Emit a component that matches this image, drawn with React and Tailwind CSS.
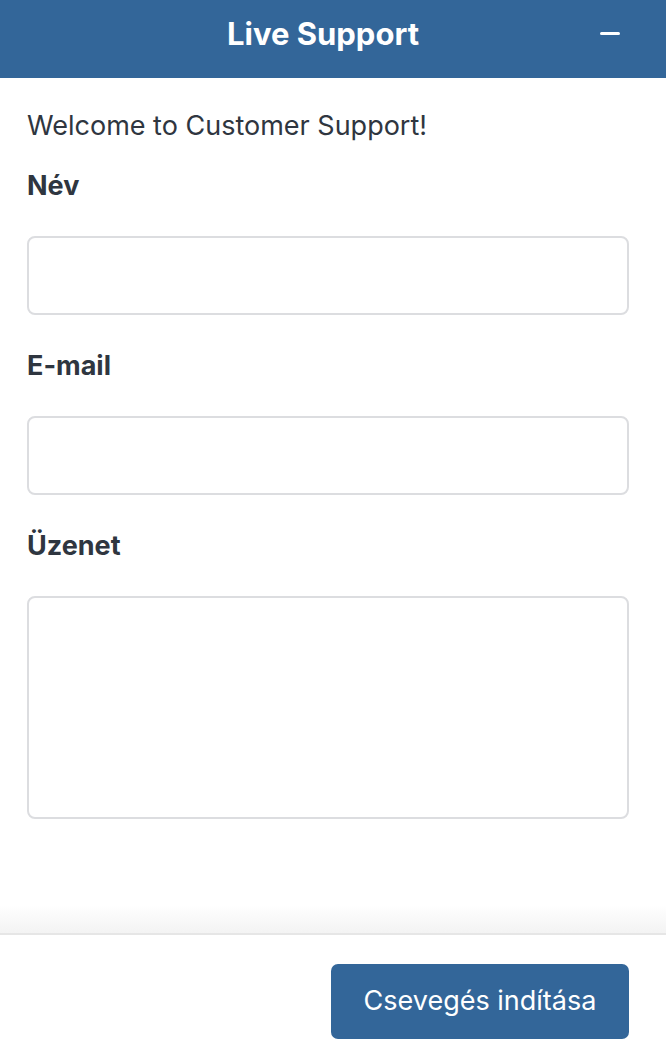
import React from 'react'

function Field({ label, tall }) {
  return (
    <div className="flex flex-col">
      <label className="text-[27px] font-bold text-[#2f3640] leading-[36px]">{label}</label>
      {tall ? (
        <textarea className="mt-[32px] h-[223px] w-full resize-none rounded-[8px] border-2 border-[#dcdde0] bg-white" />
      ) : (
        <input className="mt-[32px] h-[79px] w-full rounded-[8px] border-2 border-[#dcdde0] bg-white" />
      )}
    </div>
  )
}

export default function App() {
  return (
    <div className="flex h-[1052px] w-[666px] flex-col bg-white font-['Inter',sans-serif]">
      {/* header */}
      <div className="relative flex h-[78px] shrink-0 items-center justify-center bg-[#336699] pb-[10px] pr-[20px]">
        <span className="text-[31px] font-bold leading-[36px] text-white">Live Support</span>
        <span className="absolute right-[46px] top-[32px] h-[3px] w-[20px] rounded-sm bg-white" />
      </div>

      <div className="flex flex-1 flex-col pl-[27px] pr-[37px] pt-[30px]">
        <p className="text-[27px] leading-[36px] text-[#2f3640]">Welcome to Customer Support!</p>
        <div className="mt-[24px] flex flex-col gap-[33px]">
          <Field label="Név" />
          <Field label="E-mail" />
          <Field label="Üzenet" tall />
        </div>
      </div>

      {/* footer */}
      <div className="h-[28px] shrink-0 bg-gradient-to-b from-white to-[#f3f3f3]" />
      <div className="flex h-[119px] shrink-0 items-start justify-end border-t-2 border-[#e6e6e6] pl-[36px] pr-[37px] pt-[29px]">
        <button className="h-[75px] w-[298px] rounded-[7px] bg-[#336699] text-[27px] text-white">Csevegés indítása</button>
      </div>
    </div>
  )
}
